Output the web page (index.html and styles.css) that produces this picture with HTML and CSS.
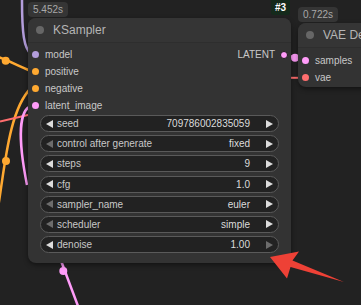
FILE: index.html
```html
<!DOCTYPE html>
<html lang="en">
<head>
    <meta charset="UTF-8">
    <meta name="viewport" content="width=device-width, initial-scale=1.0">
    <title>KSampler</title>
    <link rel="stylesheet" href="styles.css">
</head>

<body>
    <div class="canvas">
        <!-- links between nodes -->
        <svg class="links" width="361" height="305" viewBox="0 0 361 305">
            <path d="M22,0 C22,34 24,48 31,54" stroke="#b39ddb" stroke-width="2.5" fill="none"/>
            <path d="M-2,57 C8,60 18,66 31,71" stroke="#ffa931" stroke-width="2.5" fill="none"/>
            <circle cx="5.7" cy="60.7" r="4" fill="#ffa931"/>
            <path d="M-2,208 C5,165 9,110 31,88" stroke="#ffa931" stroke-width="2.5" fill="none"/>
            <circle cx="6" cy="161" r="4" fill="#ffa931"/>
            <path d="M0,121.5 L30,114.5" stroke="#ff6e6e" stroke-width="2" fill="none"/>
            <path d="M31,106 C20,110 17,135 27,185" stroke="#ff9cf9" stroke-width="2.5" fill="none"/>
            <path d="M60,258 L78,306" stroke="#ff9cf9" stroke-width="2.5" fill="none"/>
            <circle cx="63.3" cy="271" r="4" fill="#ff9cf9"/>
            <path d="M284,54.5 L307,61" stroke="#ff9cf9" stroke-width="2.5" fill="none"/>
            <circle cx="295" cy="57.7" r="4" fill="#ff9cf9"/>
            <path d="M288,77.8 L305,77.8" stroke="#ff6e6e" stroke-width="2" fill="none"/>
        </svg>

        <div class="node ksampler">
            <div class="badge time">5.452s</div>
            <div class="badge node-id">#3</div>
            <div class="node-title"><span class="title-dot"></span>KSampler</div>
            <div class="slots">
                <div class="inputs">
                    <div class="slot"><span class="dot model"></span>model</div>
                    <div class="slot"><span class="dot conditioning"></span>positive</div>
                    <div class="slot"><span class="dot conditioning"></span>negative</div>
                    <div class="slot"><span class="dot latent"></span>latent_image</div>
                </div>
                <div class="outputs">
                    <div class="slot out">LATENT<span class="dot latent linked"></span></div>
                </div>
            </div>
            <div class="widgets">
                <div class="widget"><span class="arrow left"></span><span class="label">seed</span><span class="value">709786002835059</span><span class="arrow right"></span></div>
                <div class="widget"><span class="arrow left dim"></span><span class="label">control after generate</span><span class="value">fixed</span><span class="arrow right"></span></div>
                <div class="widget"><span class="arrow left"></span><span class="label">steps</span><span class="value">9</span><span class="arrow right"></span></div>
                <div class="widget"><span class="arrow left"></span><span class="label">cfg</span><span class="value">1.0</span><span class="arrow right"></span></div>
                <div class="widget"><span class="arrow left dim"></span><span class="label">sampler_name</span><span class="value">euler</span><span class="arrow right"></span></div>
                <div class="widget"><span class="arrow left dim"></span><span class="label">scheduler</span><span class="value">simple</span><span class="arrow right"></span></div>
                <div class="widget"><span class="arrow left"></span><span class="label">denoise</span><span class="value">1.00</span><span class="arrow right dim"></span></div>
            </div>
        </div>

        <div class="node vae-decode">
            <div class="badge time">0.722s</div>
            <div class="node-title"><span class="title-dot"></span>VAE Decode</div>
            <div class="slots">
                <div class="inputs">
                    <div class="slot"><span class="dot latent"></span>samples</div>
                    <div class="slot"><span class="dot vae"></span>vae</div>
                </div>
            </div>
        </div>

        <!-- red pointer drawn over the screenshot -->
        <svg class="pointer" width="361" height="305" viewBox="0 0 361 305">
            <polygon points="270,257 299,251.5 292.5,260.5 344,282 290.5,267 287,278.5" fill="#ee4136"/>
        </svg>
    </div>
</body>
</html>
```

FILE: styles.css
```css
body {
    margin: 0;
    background: #222;
    font-family: "Liberation Sans", Arial, sans-serif;
}

.canvas {
    position: relative;
    width: 361px;
    height: 305px;
    overflow: hidden;
    background: #222;
}

.links,
.pointer {
    position: absolute;
    left: 0;
    top: 0;
}

.pointer {
    z-index: 5;
}

.node {
    position: absolute;
    background: #333;
    border-radius: 8px;
    box-shadow: 0 2px 5px rgba(0, 0, 0, 0.45);
}

.ksampler {
    left: 28px;
    top: 18px;
    width: 263px;
    height: 245px;
}

.vae-decode {
    left: 298px;
    top: 23px;
    width: 140px;
    height: 64px;
}

.badge {
    position: absolute;
    top: -16px;
    height: 15px;
    display: flex;
    align-items: center;
    padding: 0 5px;
    border-radius: 4px;
    font-size: 10px;
}

.badge.time {
    left: 0;
    background: #353535;
    color: #a8a8a8;
}

.badge.node-id {
    top: -18px;
    right: 1px;
    padding: 0 4px;
    background: #142a1b;
    color: #fff;
    font-weight: bold;
    border-radius: 0 0 3px 3px;
}

.node-title {
    height: 25px;
    display: flex;
    align-items: center;
    gap: 9px;
    padding-left: 8px;
    font-size: 12px;
    color: #b5b5b5;
    background: #353535;
    border-radius: 8px 8px 0 0;
    border-bottom: 1px solid #2e2e2e;
    box-sizing: border-box;
}

.title-dot {
    width: 8px;
    height: 8px;
    border-radius: 50%;
    background: #666;
}

.slots {
    display: flex;
    justify-content: space-between;
    padding-top: 3px;
}

.vae-decode .slots {
    padding-top: 4px;
}

.slot {
    height: 17px;
    display: flex;
    align-items: center;
    gap: 6px;
    padding-left: 4px;
    font-size: 10px;
    color: #c8c8c8;
}

.slot.out {
    gap: 5px;
    padding: 0 3px 0 0;
}

.dot {
    width: 7px;
    height: 7px;
    border-radius: 50%;
    box-sizing: border-box;
}

.dot.model { background: #b39ddb; }
.dot.conditioning { background: #ffa931; }
.dot.latent { background: #ff9cf9; }
.dot.vae { background: #ff6e6e; }

.dot.linked {
    border: 1px solid #1a1a1a;
    width: 8px;
    height: 8px;
}

.widgets {
    display: flex;
    flex-direction: column;
    gap: 3.2px;
    padding: 1px 12px 0;
}

.widget {
    height: 17px;
    box-sizing: border-box;
    display: flex;
    align-items: center;
    padding: 0 5px 0 5px;
    border: 1px solid #5a5a5a;
    border-radius: 9px;
    background: #222;
    font-size: 10px;
    color: #c8c8c8;
}

.widget .label {
    margin-left: 4px;
    flex: 1;
}

.widget .value {
    margin-right: 16px;
    color: #dcdcdc;
}

.arrow {
    width: 0;
    height: 0;
    border-top: 4px solid transparent;
    border-bottom: 4px solid transparent;
}

.arrow.left {
    border-right: 7px solid #ddd;
}

.arrow.right {
    border-left: 7px solid #ddd;
}

.arrow.left.dim {
    border-right-color: #6c6c6c;
}

.arrow.right.dim {
    border-left-color: #6c6c6c;
}
```
